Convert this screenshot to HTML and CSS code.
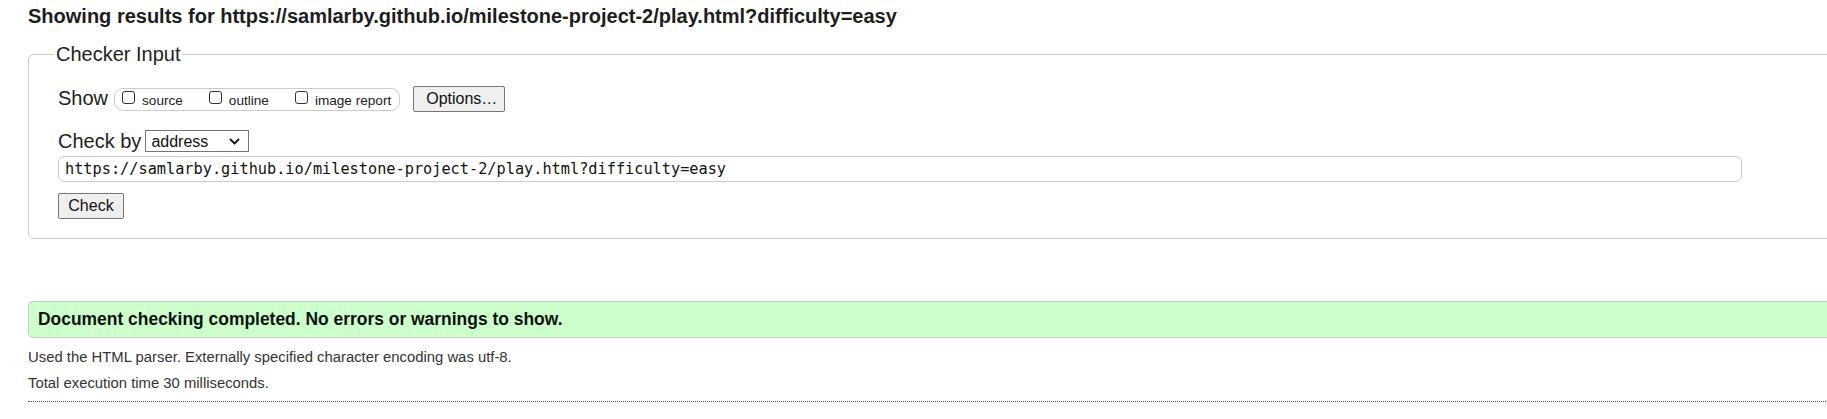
FILE: index.html
```html
<!DOCTYPE html>
<html lang="en">
<head>
<meta charset="utf-8">
<title>Showing results</title>
<link rel="stylesheet" href="styles.css">
</head>
<body>
<div class="page">
  <h2 class="title">Showing results for https://samlarby.github.io/milestone-project-2/play.html?difficulty=easy</h2>
  <fieldset class="checker">
    <legend>Checker Input</legend>
    <div class="row show-row">
      <span class="lbl">Show</span>
      <span class="pill">
        <label class="opt"><span class="box"></span>source</label>
        <label class="opt"><span class="box"></span>outline</label>
        <label class="opt"><span class="box"></span>image report</label>
      </span>
      <button class="btn options" type="button">Options…</button>
    </div>
    <div class="row by-row">
      <span class="lbl">Check by</span>
      <span class="select-wrap">
        <select class="select"><option>address</option></select>
        <svg class="chev" width="11" height="7" viewBox="0 0 11 7"><path d="M1 1l4.5 4.5L10 1" fill="none" stroke="#111" stroke-width="1.8"/></svg>
      </span>
    </div>
    <input class="url" type="text" value="https://samlarby.github.io/milestone-project-2/play.html?difficulty=easy">
    <div class="row">
      <button class="btn check" type="button">Check</button>
    </div>
  </fieldset>
  <div class="success">Document checking completed. No errors or warnings to show.</div>
  <p class="info first">Used the HTML parser. Externally specified character encoding was utf-8.</p>
  <p class="info">Total execution time 30 milliseconds.</p>
  <hr class="dots">
</div>
</body>
</html>
```
FILE: styles.css
```css
html { overflow: hidden; }
body {
  margin: 0;
  background: #fff;
  color: #1d1d1d;
  font-family: "Liberation Sans", Arial, sans-serif;
}
.page {
  width: 1860px;
  padding-left: 28px;
}
.title {
  font-size: 20px;
  line-height: 24px;
  font-weight: bold;
  margin: 4px 0 14px;
  color: #1d1d1d;
}
.checker {
  margin: 0;
  border: 1px solid #cccccc;
  border-radius: 6px;
  padding: 20px 0 19px 29px;
}
.checker legend {
  font-size: 20px;
  line-height: 24px;
  padding: 0 2px;
  margin-left: -4px;
  color: #222;
}
.row {
  display: flex;
  align-items: center;
}
.show-row { height: 26px; }
.lbl {
  font-size: 20px;
  line-height: 24px;
  color: #222;
}
.show-row .lbl { padding-bottom: 3px; }
.pill {
  display: flex;
  align-items: center;
  height: 23px;
  box-sizing: border-box;
  margin-left: 6px;
  padding: 0 8px 0 7px;
  border: 1px solid #cccccc;
  border-radius: 9px;
  gap: 26px;
}
.opt {
  display: flex;
  align-items: center;
  font-size: 13.6px;
  color: #222;
  gap: 7px;
  padding-top: 2px;
}
.box {
  width: 13px;
  height: 13px;
  box-sizing: border-box;
  border: 1px solid #333;
  border-radius: 3px;
  background: #fff;
  margin-top: -6px;
}
.btn {
  font-family: "Liberation Sans", Arial, sans-serif;
  font-size: 16px;
  color: #111;
  background: #efefef;
  border: 1px solid #767676;
  border-radius: 2px;
  height: 26px;
  box-sizing: border-box;
  padding: 0 12px;
  margin: 0;
}
.options {
  margin-left: 13px;
  width: 92px;
}
.by-row {
  margin-top: 18px;
  height: 22px;
}
.select-wrap {
  position: relative;
  margin-left: 4px;
  display: inline-block;
}
.select {
  appearance: none;
  -webkit-appearance: none;
  width: 104px;
  height: 22px;
  box-sizing: border-box;
  border: 1px solid #767676;
  border-radius: 0;
  background: #fff;
  font-family: "Liberation Sans", Arial, sans-serif;
  font-size: 16px;
  color: #111;
  padding: 0 0 0 5px;
  margin: 0;
  display: block;
}
.chev {
  position: absolute;
  right: 9px;
  top: 8px;
}
.url {
  display: block;
  margin: 4px 0 0 0;
  width: 1684px;
  height: 26px;
  box-sizing: border-box;
  border: 1px solid #cccccc;
  border-radius: 6px;
  padding: 0 6px;
  font-family: "DejaVu Sans Mono", "Liberation Mono", monospace;
  font-size: 15.25px;
  color: #111;
  background: #fff;
}
.check {
  margin-top: 11px;
  width: 66px;
  padding: 0;
}
.success {
  margin-top: 62px;
  border: 1px solid #c4cfc4;
  border-right: none;
  border-radius: 5px 0 0 5px;
  background: #ccffcc;
  padding: 7px 9px;
  font-size: 17.45px;
  line-height: 21px;
  font-weight: bold;
  color: #111;
}
.info {
  margin: 8px 0 0;
  font-size: 14.85px;
  line-height: 18px;
  color: #333;
}
.info.first { margin-top: 10px; }
.dots {
  margin: 9px 0 0;
  border: none;
  border-top: 1px dotted #555;
  height: 0;
}
```
